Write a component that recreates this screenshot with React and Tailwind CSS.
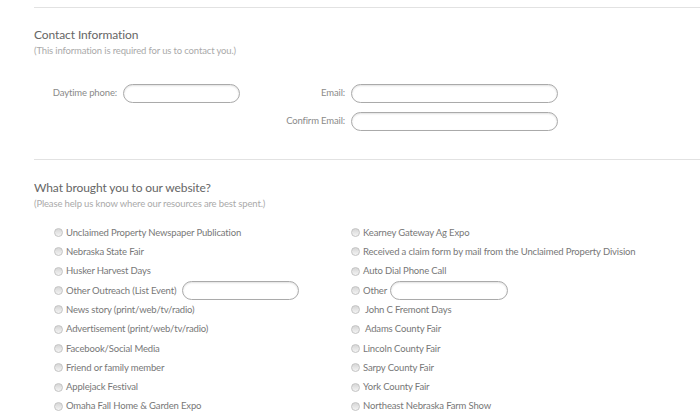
import React from "react";

const leftOptions = [
  { label: "Unclaimed Property Newspaper Publication" },
  { label: "Nebraska State Fair" },
  { label: "Husker Harvest Days" },
  { label: "Other Outreach (List Event)", input: "w-[117px] ml-[6px]" },
  { label: "News story (print/web/tv/radio)" },
  { label: "Advertisement (print/web/tv/radio)" },
  { label: "Facebook/Social Media" },
  { label: "Friend or family member" },
  { label: "Applejack Festival" },
  { label: "Omaha Fall Home & Garden Expo" },
];

const rightOptions = [
  { label: "Kearney Gateway Ag Expo" },
  { label: "Received a claim form by mail from the Unclaimed Property Division" },
  { label: "Auto Dial Phone Call" },
  { label: "Other", input: "w-[118px] ml-[3px]" },
  { label: "John C Fremont Days", pad: true },
  { label: "Adams County Fair", pad: true },
  { label: "Lincoln County Fair" },
  { label: "Sarpy County Fair" },
  { label: "York County Fair" },
  { label: "Northeast Nebraska Farm Show" },
];

function TextBox({ className }) {
  return (
    <div
      className={
        "h-[19px] rounded-full border border-[#aaaaaa] bg-white shadow-[inset_0_1px_2px_rgba(0,0,0,0.12)] " +
        className
      }
    />
  );
}

function Radio() {
  return (
    <span className="w-[9px] h-[9px] rounded-full border border-[#c4c4c4] bg-gradient-to-b from-[#d6d6d6] to-[#f4f4f4] shrink-0" />
  );
}

function OptionRow({ opt }) {
  return (
    <div className="h-[19.33px] flex items-center">
      <Radio />
      <span className={"text-[9.5px] tracking-[-0.15px] text-[#777777] whitespace-nowrap " + (opt.pad ? "ml-[5px]" : "ml-[3px]")}>
        {opt.label}
      </span>
      {opt.input && <TextBox className={opt.input} />}
    </div>
  );
}

export default function App() {
  return (
    <div className="w-[700px] h-[419px] overflow-hidden bg-white pl-[34px] font-['Lato',sans-serif]">
      <div className="h-px bg-[#e2e2e2] mt-[7px]" />

      {/* Contact info */}
      <h2 className="mt-[18px] text-[12px] tracking-[-0.1px] leading-[18px] text-[#666666]">Contact Information</h2>
      <p className="text-[9.5px] tracking-[-0.15px] leading-[14px] text-[#aaaaaa]">(This information is required for us to contact you.)</p>

      <div className="mt-[26px] flex items-center text-[9.5px] tracking-[-0.15px] text-[#8a8a8a]">
        <label className="w-[83px] text-right">Daytime phone:</label>
        <TextBox className="w-[117px] ml-[6px]" />
        <label className="w-[105px] text-right">Email:</label>
        <TextBox className="w-[207px] ml-[6px]" />
      </div>
      <div className="mt-[9px] flex items-center text-[9.5px] tracking-[-0.15px] text-[#8a8a8a]">
        <label className="w-[311px] text-right">Confirm Email:</label>
        <TextBox className="w-[207px] ml-[6px]" />
      </div>

      <div className="h-px bg-[#e2e2e2] mt-[28px]" />

      {/* Referral */}
      <h2 className="mt-[19px] text-[12px] tracking-[-0.1px] leading-[18px] text-[#666666]">What brought you to our website?</h2>
      <p className="text-[9.5px] tracking-[-0.15px] leading-[14px] text-[#aaaaaa]">(Please help us know where our resources are best spent.)</p>

      <div className="mt-[12px] pl-[20px] grid grid-cols-[297px_1fr]">
        <div>
          {leftOptions.map((o) => (
            <OptionRow key={o.label} opt={o} />
          ))}
        </div>
        <div>
          {rightOptions.map((o) => (
            <OptionRow key={o.label} opt={o} />
          ))}
        </div>
      </div>
    </div>
  );
}
